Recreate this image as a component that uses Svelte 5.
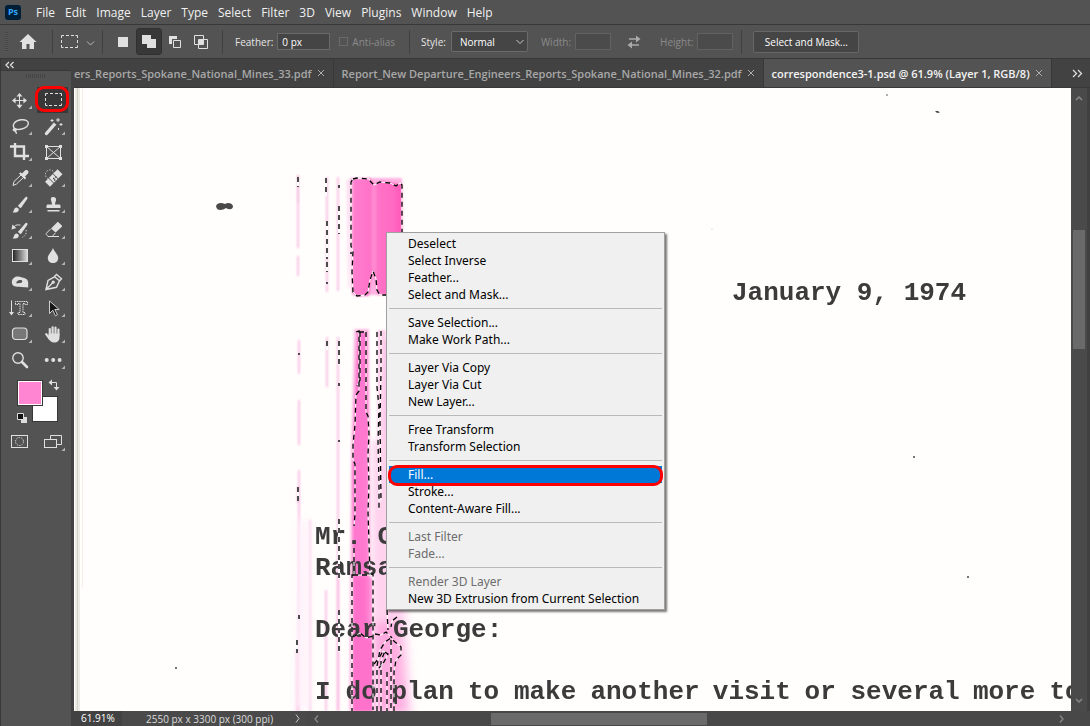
<script>
  const menus = ['File', 'Edit', 'Image', 'Layer', 'Type', 'Select', 'Filter', '3D', 'View', 'Plugins', 'Window', 'Help'];

  const tabs = [
    { name: 'ers_Reports_Spokane_National_Mines_33.pdf', first: true },
    { name: 'Report_New Departure_Engineers_Reports_Spokane_National_Mines_32.pdf' },
    { name: 'correspondence3-1.psd @ 61.9% (Layer 1, RGB/8)', active: true }
  ];

  const groups = [
    ['Deselect', 'Select Inverse', 'Feather...', 'Select and Mask...'],
    ['Save Selection...', 'Make Work Path...'],
    ['Layer Via Copy', 'Layer Via Cut', 'New Layer...'],
    ['Free Transform', 'Transform Selection'],
    ['Fill...', 'Stroke...', 'Content-Aware Fill...'],
    ['Last Filter', 'Fade...'],
    ['Render 3D Layer', 'New 3D Extrusion from Current Selection']
  ];
  const disabled = ['Last Filter', 'Fade...', 'Render 3D Layer'];

  const tools = [
    'move', 'marquee', 'lasso', 'wand', 'crop', 'frame', 'eyedropper', 'heal', 'brush', 'stamp', 'history',
    'eraser', 'gradient', 'blur', 'burn', 'pen', 'type', 'select', 'shape', 'hand', 'zoom', 'more'
  ];
  const single = ['frame', 'zoom', 'marquee'];

  const pitch = 15.3;
  const lineWords = 'I do plan to make another visit or several more to'.split(' ');
  let at = 0;
  const words = lineWords.map((w) => {
    const x = 315 + at * pitch;
    at += w.length + 1;
    return { w, x };
  });

  const ants = [
    'M353 179l4-1 12 1 2 3 3 3 6-3 10 1 6 3 4-3 2 2v55l0 55h-22l-3-5-1-11-3-8-3 9-2 12-3 3-8 1-4-4-1-20 1-20-2-6V182z',
    'M356 332l3-1v60l-3 4-1 30-2 20v15l2 4v50l-1 12M354 548v27h-2v136M366 332v80l2 4 1 18-1 20 1 30-1 28 1 30 1 32h3v136M359 332h7M360 332v48l-3 6',
    'M377 332v55l2 20-1 35 1 40v28M381 331v40l-1 50 1 80M353 575h18M353 637l7-4 6 5 7-2',
    'M377 711v-45l3-16 5-8 6-4 4 4 6 5v8l-5 5-2 12v39M381 711v-50l4-10M387 672v39M391 640v71M387 610l1 20M397 617l-5 4-1 6',
    'M375 634l6 1 5-3 6 6M374 664l5-6 4-7 5 3-4 8-5 6'
  ];
  const specks = 'M298 177v10M298 487v14M299 615v4M297 640v13M326 178v18M327 221v38M327 262v10M327 341v9M339 185v3M339 206v28M339 341v24M339 383v3M339 440v2M339 519v60M339 610v42M327 282v2M351 252v2M299 353v2';
</script>

{#snippet glyph(name)}
  {#if name === 'move'}
    <path d="M15.500 7.500v12.500M9 13.500h13" class="s" />
    <path class="f" d="M15.500 6l3 3.600h-6zM15.500 21.400l3-3.600h-6zM8 13.600l3.600-3v6zM23 13.600l-3.600-3v6z" />
  {:else if name === 'marquee'}
    <path class="s" d="M8.500 9V6.500H11M13 6.500h3M18 6.500h3M22.500 6.500H24.500V9M24.500 11v3M24.500 16.500V18.500H22M20 18.500h-3M15 18.500h-3M10.500 18.500h-2V16M8.500 14v-3" />
  {:else if name === 'lasso'}
    <path class="s w" d="M11 16C7 12 11 7.500 17 6.800c5-.600 8 1.700 7.300 4.400-.8 3.500-6.300 5.500-10.300 5.200-2-.200-4.500-1-4.700.3-.1 1.400 3 1.500 3-.1 0-1.200-1.600-1-1.500.5 0 1.300 1.600 1.500 1.700 3.600" />
  {:else if name === 'wand'}
    <path d="M9.500 20.500l6.500-7.500" stroke="#e0e0e0" stroke-width="3.400" stroke-linecap="round" />
    <path d="M16.500 12.400l1.600-1.800" stroke="#e0e0e0" stroke-width="3.400" />
    <path class="s" d="M15 6v3M13.500 7.500h3M21 5v4M19 7h4M24 10v3M22.500 11.500h3M21.500 15v2" />
  {:else if name === 'crop'}
    <path d="M11 4v13h14M6 7.500h14V21" stroke="#e0e0e0" stroke-width="2.400" fill="none" />
  {:else if name === 'frame'}
    <path class="s" d="M9.500 7.500h14v12h-14zM9.500 7.500l14 12M23.500 7.500l-14 12" />
    <path class="f" d="M8 6h3v3H8zM22 6h3v3h-3zM8 18h3v3H8zM22 18h3v3h-3z" />
  {:else if name === 'eyedropper'}
    <path class="s" d="M9 20.500l1-4 7-6.500 2.500 2.500-7 6.500z" />
    <path class="f" d="M15 8.500l1.500-1.200 1.500 1.200L21 5.600c2-1.600 4.600.8 3 3l-3 3 1.200 1.500-1.300 1.500z" />
  {:else if name === 'heal'}
    <circle cx="13" cy="9.500" r="4.600" fill="none" stroke="#e0e0e0" stroke-dasharray="1.300 1.600" />
    <path d="M10.500 19.200L23 6.800" stroke="#e0e0e0" stroke-width="7" />
    <path d="M11.600 13l6 6M15.900 8.700l6 6" stroke="#535353" />
    <path d="M16 13.500h1.500M17 15h1.500M18 12h1.500" stroke="#535353" stroke-width="1.300" />
  {:else if name === 'brush'}
    <path class="f" d="M8.500 21.300c1.600-.8 1-2.500 2.300-4 1.400-1.500 4.300-.5 4 1.700-.3 2.600-4.300 3-6.300 2.300zM14 14.800l7.400-8.600c1.100-1 2.600.200 2 1.500l-6.600 9.500c-.8-.3-2.300-1.200-2.800-2.400z" />
  {:else if name === 'stamp'}
    <path class="f" d="M14 6.700c1.500-1.300 4.300-1 5 1 .6 2-1 3.300-1 5.800h4c1 0 1.500.5 1.500 1.500v2h-14v-2c0-1 .5-1.500 1.500-1.500h4c0-2.500-1.600-4-1-6.800zM10.500 19h12v1.600h-12z" />
  {:else if name === 'history'}
    <path class="f" d="M8.500 21.300c1.600-.8 1-2.500 2.300-4 1.400-1.500 4.300-.5 4 1.700-.3 2.600-4.300 3-6.300 2.300zM14 14.800l7.400-8.600c1.100-1 2.600.200 2 1.500l-6.600 9.500c-.8-.3-2.300-1.200-2.800-2.400zM7.500 12.500l1-5 3.800 3.400z" />
    <path class="s" d="M10.500 9.200c1.300-1.300 3.500-1.700 6-1" />
    <path d="M22 13c1 3-1 6.500-4 7.500" fill="none" stroke="#e0e0e0" stroke-dasharray="1.300 1.600" />
  {:else if name === 'eraser'}
    <path class="f" d="M14 11.500l6-6c.6-.6 1-.6 1.600 0l3 2.800c.6.600.6 1 0 1.700l-6 5.500z" />
    <path class="s" d="M13.500 12l-4 4.200c-.6.600-.6 1 0 1.600l1.800 1.700h4l3-3.500M11 19.500h11" />
  {:else if name === 'gradient'}
    <rect x="8.500" y="6.500" width="15" height="12" fill="url(#ramp)" stroke="#e0e0e0" />
  {:else if name === 'blur'}
    <path class="f" d="M16 5c1 3.500 5.200 6.500 5.200 10 0 3-2.200 5-5.200 5s-5.200-2-5.200-5c0-3.500 4.200-6.500 5.200-10z" />
  {:else if name === 'burn'}
    <path class="f" fill-rule="evenodd" d="M8 14.500c-.6-3 1-6.500 5-7 3-.4 4 .8 6.500 1.300 3 .6 4.700 2.500 4.700 5v4.700l-3-.3c-2 .3-4-.4-6-.5-3 0-6.500 0-7.200-3.200zM12.600 14.400l4.700-.6c1-.3 1.300-2 .3-2.600-2-.8-6 .8-5 3.200z" />
  {:else if name === 'pen'}
    <path class="s w" d="M9 20.500l2-9 6.500-3.700 5 4-3 6.500zM9.500 20l6-6M17.500 7.500l2-2 5 4.200-1.800 2" />
    <circle class="f" cx="16.200" cy="13.200" r="1.600" />
  {:else if name === 'type'}
    <path class="s" d="M7.500 5.500v14" /><path class="f" d="M5 17h5l-2.500 3.500z" />
    <path d="M11.500 9.500v-3h12v3h-2.500v-1h-2v9h2v2h-7v-2h2v-9h-2v1z" fill="none" stroke="#e0e0e0" stroke-dasharray="1.500 .7" />
  {:else if name === 'select'}
    <path d="M12.500 6v12.500l3.300-3.300 2.600 5.600 2-1-2.600-5.300h4.400z" fill="#151515" stroke="#e0e0e0" stroke-width=".9" />
  {:else if name === 'shape'}
    <rect x="8.500" y="7" width="14.500" height="11.500" rx="3.200" fill="#777" stroke="#e0e0e0" stroke-width="1.200" />
  {:else if name === 'hand'}
    <path d="M12.800 14V8M15.600 13V6.300M18.500 13V6.700M21.400 14V8.500M12.500 17.500l-3.300-4.300" stroke="#e0e0e0" stroke-width="2.200" stroke-linecap="round" />
    <path class="f" d="M11.700 12.500h10.800v4c0 3-2.200 5-5.300 5-3 0-4.500-1.700-6-4z" />
  {:else if name === 'zoom'}
    <circle cx="14" cy="11" r="5.200" class="s w" /><path d="M18 15l5 5" stroke="#e0e0e0" stroke-width="2.600" stroke-linecap="round" />
  {:else if name === 'more'}
    <circle class="f" cx="9.700" cy="13" r="2" /><circle class="f" cx="16.200" cy="13" r="2" /><circle class="f" cx="22.600" cy="13" r="2" />
  {:else if name === 'mask'}
    <rect x="7.500" y="6.500" width="16" height="12" class="s" />
    <circle cx="15.500" cy="12.500" r="4" fill="none" stroke="#e0e0e0" stroke-dasharray="1.300 1.200" />
  {:else if name === 'screen'}
    <path class="s" d="M13.500 10.500v-4h11v9h-5" /><rect x="7.500" y="10.500" width="12" height="8" class="s" />
  {/if}
{/snippet}

{#snippet tool(name, corner)}
  <button class="tool" class:chosen={name === 'marquee'} aria-label={name}>
    <svg width="33" height="26" viewBox="0 0 33 26" fill="none">
      {@render glyph(name)}
      {#if corner}<path d="M28 18.500V22h-3.500z" fill="#b5b5b5" />{/if}
    </svg>
  </button>
{/snippet}

<div class="app">
  <nav class="menubar">
    <span class="logo">Ps</span>
    {#each menus as m}<button>{m}</button>{/each}
  </nav>

  <div class="options">
    <span class="grip"></span>
    <button class="icon home" aria-label="Home">
      <svg width="18" height="16" viewBox="0 0 18 16"><path class="f" d="M9 0l8.500 8H15v7h-4.500v-5h-3v5H3V8H.5z" /></svg>
    </button>
    <i class="sep"></i>
    <button class="icon preset" aria-label="Tool preset">
      <svg width="34" height="16" viewBox="0 0 34 16" fill="none">
        <path class="s" d="M.5 4V1.500H3M5 1.500h3M10 1.500h3M14.500 1.500h2V4M16.500 6v3M16.500 11.500v2H14M12 13.500H9M7 13.500H4M2.500 13.500h-2V11M.5 9V6" />
        <path d="M26 7.500l3.500 3.500L33 7.500" stroke="#bbb" fill="none" />
      </svg>
    </button>
    <i class="sep"></i>
    <div class="modes">
      <button class="mode" aria-label="New selection"><svg width="16" height="16"><path class="f" d="M3 3h10v10H3z" /></svg></button>
      <button class="mode on" aria-label="Add to selection"><svg width="16" height="16"><path class="f" d="M1 1h9v4h5v9H6v-4H1z" /></svg></button>
      <button class="mode" aria-label="Subtract from selection"><svg width="16" height="16"><path class="f" d="M2 2h8v3H5v5H2z" /><path class="s" d="M6.500 6.500h7v7h-7z" /></svg></button>
      <button class="mode" aria-label="Intersect with selection"><svg width="16" height="16"><path class="s" d="M1.500 1.500h9v9h-9zM5.500 5.500h9v9h-9z" /><path class="f" d="M6 6h4v4H6z" /></svg></button>
    </div>
    <i class="sep"></i>
    <label class="feather">Feather: <input value="0 px" /></label>
    <label class="check off"><input type="checkbox" disabled />Anti-alias</label>
    <i class="sep"></i>
    <label class="style">Style:
      <span class="pick">
        <select><option>Normal</option></select>
        <svg width="8" height="6" viewBox="0 0 8 6"><path d="M.5 1L4 4.500 7.500 1" stroke="#ccc" fill="none" /></svg>
      </span>
    </label>
    <label class="off size">Width: <input disabled /></label>
    <button class="icon swap" aria-label="Swap width and height">
      <svg width="14" height="14" viewBox="0 0 14 14" fill="none"><path d="M2 4h8M12 10H4" stroke="#aaa" stroke-width="1.600" /><path d="M9 .5L13.500 4 9 7.500zM5 6.500L.5 10 5 13.500z" fill="#aaa" /></svg>
    </button>
    <label class="off size">Height: <input disabled /></label>
    <i class="sep"></i>
    <button class="mask">Select and Mask...</button>
  </div>

  <div class="work">
    <aside>
      <button class="collapse" aria-label="Collapse panel">
        <svg width="10" height="8" viewBox="0 0 10 8"><path d="M4 1L1 4l3 3M8.500 1l-3 3 3 3" stroke="#ddd" stroke-width="1.300" fill="none" /></svg>
      </button>
      <div class="handle"></div>
      <svg width="0" height="0" class="defs"><defs><linearGradient id="ramp"><stop offset="0" stop-color="#222" /><stop offset="1" stop-color="#ddd" /></linearGradient></defs></svg>
      <div class="tools">
        {#each tools as t}{@render tool(t, !single.includes(t))}{/each}
      </div>
      <div class="colors">
        <button class="swatch back" aria-label="Background colour"></button>
        <button class="swatch fore" aria-label="Foreground colour"></button>
        <button class="flip" aria-label="Switch colours">
          <svg width="12" height="12" viewBox="0 0 12 12"><path class="s" d="M3 3.500h5.500V9" /><path class="f" d="M4 .5v6L.5 3.500zM5.500 8h6L8.500 11.500z" /></svg>
        </button>
        <button class="reset" aria-label="Default colours">
          <svg width="11" height="11" viewBox="0 0 11 11"><path d="M4 4h6v6H4z" fill="#ddd" /><path d="M.5.500h6v6h-6z" fill="#111" stroke="#ddd" /></svg>
        </button>
      </div>
      <div class="tools">
        {@render tool('mask', false)}{@render tool('screen', true)}
      </div>
    </aside>

    <main>
      <div class="tabs">
        {#each tabs as t}
          <div class="tab" class:active={t.active} class:first={t.first}>
            <span>{t.name}</span>
            <button aria-label="Close tab"><svg width="8" height="8" viewBox="0 0 8 8"><path d="M1 1l6 6M7 1L1 7" stroke="#aaa" /></svg></button>
          </div>
        {/each}
        <button class="overflow" aria-label="More tabs">
          <svg width="11" height="9" viewBox="0 0 11 9"><path d="M1 1l3.500 3.500L1 8M6 1l3.500 3.500L6 8" stroke="#ddd" stroke-width="1.300" fill="none" /></svg>
        </button>
      </div>

      <div class="view">
        <div class="canvas">
          <svg class="scan" width="997" height="623" viewBox="74 88 997 623">
            <defs>
              <filter id="soft" x="-30%" y="-5%" width="160%" height="110%"><feGaussianBlur stdDeviation="1" /></filter>
              <filter id="wide" x="-50%" y="-10%" width="200%" height="120%"><feGaussianBlur stdDeviation="4" /></filter>
              <filter id="ink" x="-5%" y="-10%" width="110%" height="120%"><feGaussianBlur stdDeviation=".4" /></filter>
              <linearGradient id="block"><stop offset="0" stop-color="#ff7fcf" /><stop offset=".38" stop-color="#ff72c8" /><stop offset=".44" stop-color="#ff94d6" /><stop offset=".5" stop-color="#ff74c8" /><stop offset=".85" stop-color="#ff68c1" /><stop offset="1" stop-color="#ff55b8" /></linearGradient>
            </defs>
            <rect x="75" y="88" width="5" height="623" fill="#eceae4" /><rect x="77" y="88" width="1" height="623" fill="#d4d1c7" />
            <rect x="82" y="88" width="1" height="500" fill="#f6efe4" />
            <g filter="url(#soft)">
              <path d="M350 178h52l1 117h-51z" fill="#ffb3e2" />
              <path d="M346 180h4v108h-2z" fill="#fde3f4" />
              <path d="M353 179l17-1 5 6 6-3 21 3v111h-24l-5-23-4 24h-13l-4-4z" fill="url(#block)" />
              <path d="M354 329h15l3 382h-23l2-260z" fill="#ffc1e6" />
              <path d="M357 331h10l2 104 1 276h-16l-2-240z" fill="#ff78cf" />
              <path d="M353 578h20v133h-20z" fill="#ff70cb" />
              <path d="M377 330h9v210h-9z" fill="#ffd1ec" />
              <path d="M385 340h6v250h-6z" fill="#fcc5e8" />
              <path d="M298 175v28M298 487v16" stroke="#f09ad0" stroke-width="1.500" />
              <path d="M298 203v45M298 256v20M299 340v34M299 400v45M299 470v241M327 177v115M327 337v50M338 177v114M338 337v374M310 520v191M326 590v121" stroke="#f8b9e2" stroke-width="1.700" />
              <path d="M338 560v151M297 650v61" stroke="#fba5dc" stroke-width="2.500" opacity=".6" />
            </g>
            <g filter="url(#wide)">
              <path d="M372 440h18l14 150 8 125h-40z" fill="#ffd2ee" />
              <path d="M374 622h24l8 90h-32z" fill="#ffabe0" />
              <path d="M298 520h12v190h-14z" fill="#fff3fa" />
            </g>
            <path d="M354 640h18v71h-18z" fill="#ff72cb" filter="url(#soft)" />
            <g fill="#4a4a48" filter="url(#ink)">
              <path d="M216 206c1-3 5-4 9-2 3-2 7-1 8 2 0 4-4 4-7 2-3 2-9 4-10-2z" />
              <path d="M935 111l3 0 2 1.500-3 .5z" /><circle cx="887" cy="95" r=".8" /><circle cx="914" cy="457" r="1" /><circle cx="968" cy="577" r="1" /><circle cx="176" cy="668" r="1" /><circle cx="712" cy="229" r=".6" opacity=".4" />
            </g>
            <g class="typed" filter="url(#ink)">
              <text x="732" y="300">January 9, 1974</text>
              <text x="315" y="544">Mr. C</text>
              <text x="315" y="575">Ramsa</text>
              <text x="315" y="637">Dear George:</text>
              <text y="699">{#each words as { w, x }}<tspan {x}>{w} </tspan>{/each}</text>
            </g>
            <g fill="none">
              {#each ants as d}
                <path {d} stroke="#fff" />
                <path {d} stroke="#000" stroke-width="1.300" stroke-dasharray="5 4" />
              {/each}
              <path d={specks} stroke="#fff" stroke-width="2" />
              <path d={specks} stroke="#000" stroke-width="1.400" stroke-dasharray="5 4" />
            </g>
          </svg>

          <div class="context" role="menu">
            {#each groups as g, i}
              {#if i}<hr />{/if}
              {#each g as item}
                <button role="menuitem" class:hot={item === 'Fill...'} disabled={disabled.includes(item)}>{item}</button>
              {/each}
            {/each}
          </div>
        </div>
        <div class="vbar">
          <svg width="8" height="6" viewBox="0 0 8 6"><path d="M1 5l3-3 3 3" stroke="#888" stroke-width="1.500" fill="none" /></svg>
          <div class="vthumb"></div>
          <svg width="8" height="6" viewBox="0 0 8 6"><path d="M1 1l3 3 3-3" stroke="#888" stroke-width="1.500" fill="none" /></svg>
        </div>
      </div>

      <footer>
        <span class="zoom">61.91%</span>
        <span class="dims">2550 px x 3300 px (300 ppi)</span>
        <button class="info" aria-label="Document info"><svg width="5" height="9" viewBox="0 0 5 9"><path d="M1 .5l3 4-3 4" stroke="#ccc" fill="none" /></svg></button>
        <div class="hbar">
          <svg width="5" height="8" viewBox="0 0 5 8"><path d="M4 .5L1 4l3 3.500" stroke="#888" stroke-width="1.300" fill="none" /></svg>
          <div class="hthumb"></div>
          <svg width="5" height="8" viewBox="0 0 5 8"><path d="M1 .5L4 4 1 7.500" stroke="#888" stroke-width="1.300" fill="none" /></svg>
        </div>
      </footer>
    </main>
  </div>
</div>

<style>
  :global(body) { margin: 0; background: #535353; }
  .app { height: 100vh; display: flex; flex-direction: column; background: #535353; color: #e6e6e6; font: 10px "Open Sans", sans-serif; overflow: hidden; }
  button, input, select { font: inherit; color: inherit; margin: 0; padding: 0; border: 0; background: none; border-radius: 0; }
  svg { display: block; flex: none; }
  .f { fill: #e0e0e0; }
  .s { fill: none; stroke: #e0e0e0; stroke-width: 1; }
  .s.w { stroke-width: 1.4; }

  .menubar { flex: none; height: 24px; display: flex; align-items: center; gap: 10px; padding-left: 5px; font-size: 12px; color: #f0f0f0; border-bottom: 1px solid #383838; white-space: nowrap; }
  .logo { width: 16px; height: 15px; line-height: 14px; border-radius: 3px; background: #001e36; color: #31a8ff; font-size: 9px; font-weight: 700; text-align: center; margin-right: 5px; }

  .options { flex: none; height: 33px; display: flex; align-items: center; border-bottom: 1px solid #383838; white-space: nowrap; }
  .grip { width: 3px; height: 20px; margin: 0 11px 0 5px; background: repeating-linear-gradient(#444 0 1px, #5a5a5a 1px 2px); }
  .home { margin-right: 15px; }
  .sep { flex: none; width: 1px; height: 24px; background: #404040; }
  .preset { margin: 0 7px 0 8px; }
  .modes { display: flex; gap: 2px; margin: 0 9px 0 8px; }
  .mode { width: 24px; height: 25px; display: grid; place-items: center; }
  .mode.on { background: #383838; outline: 1px solid #303030; border-radius: 2px; }
  label { display: flex; align-items: center; }
  .options input:not([type='checkbox']) { box-sizing: border-box; height: 17px; width: 53px; border: 1px solid #6a6a6a; background: #454545; padding-left: 4px; margin-left: 4px; color: #fff; }
  .feather { margin-left: 12px; }
  .check { margin: 0 14px 0 9px; gap: 4px; }
  .check input { appearance: none; width: 9px; height: 9px; border: 1px solid #6a6a6a; }
  .off { color: #8a8a8a; }
  .options .size input { width: 36px; border-color: #626262; background: #4b4b4b; }
  .style { margin: 0 13px 0 11px; gap: 5px; }
  .pick { display: grid; align-items: center; justify-items: end; }
  .pick > * { grid-area: 1 / 1; }
  .pick svg { margin-right: 4px; pointer-events: none; }
  .pick select { appearance: none; width: 77px; height: 21px; box-sizing: border-box; background: #454545; border: 1px solid #6a6a6a; border-radius: 2px; padding-left: 8px; color: #fff; }
  .swap { margin: 0 19px 0 16px; }
  .options .size + .sep { margin: 0 11px 0 8px; }
  .mask { height: 22px; width: 106px; border: 1px solid #666; background: #454545; color: #fff; border-radius: 2px; }

  .work { flex: 1; min-height: 0; display: flex; }
  aside { flex: none; width: 74px; box-sizing: border-box; border-left: 1px solid #383838; border-right: 3px solid #424242; display: flex; flex-direction: column; }
  .collapse { height: 12px; background: #424242; border-bottom: 1px solid #383838; padding-left: 4px; }
  .handle { height: 4px; width: 19px; margin: 3px 0 9px 25px; background: repeating-linear-gradient(90deg, #444 0 1px, #555 1px 2px); }
  .defs { position: absolute; }
  .tools { display: grid; grid-template-columns: 33px 33px; padding-left: 3px; }
  .tool { height: 26px; position: relative; }
  .chosen { background: linear-gradient(90deg, #383838 31px, #535353 31px); }
  .chosen::after { content: ''; position: absolute; inset: -1px 1px 1px -2px; border: 3px solid #f00; border-radius: 9px; }
  .colors { position: relative; height: 56px; }
  .swatch { position: absolute; width: 26px; height: 26px; border: 1px solid #383838; box-shadow: inset 0 0 0 1px #fff; }
  .fore { left: 16px; top: 7px; background: #ff85d2; }
  .back { left: 31px; top: 23px; background: #fff; }
  .flip { position: absolute; left: 47px; top: 6px; }
  .reset { position: absolute; left: 16px; top: 40px; }

  main { flex: 1; min-width: 0; display: flex; flex-direction: column; }
  .tabs { flex: none; height: 28px; display: flex; background: #424242; border-bottom: 1px solid #383838; font-size: 11px; font-weight: 600; color: #a8a8a8; white-space: nowrap; }
  .tab { display: flex; align-items: center; gap: 5px; padding: 0 8px; border-right: 1px solid #383838; }
  .tab.first { padding-left: 0; }
  .tab.active { background: #535353; color: #f4f4f4; }
  .overflow { margin-left: auto; padding-right: 7px; }

  .view { flex: 1; min-height: 0; display: flex; }
  .canvas { flex: 1; min-width: 0; position: relative; overflow: hidden; background: #fffefc; }
  .scan { position: absolute; left: 0; top: 0; }
  .typed { font: 700 26px "Liberation Mono", monospace; fill: #3b3a3b; }

  .context { position: absolute; left: 312px; top: 144px; width: 273px; padding: 2px; border: 1px solid #a0a0a0; background: #f0f0f0; box-shadow: 2px 2px 2px #0008; font: 12px "Noto Sans", sans-serif; color: #000; display: flex; flex-direction: column; }
  .context button { height: 17px; line-height: 17px; text-align: left; padding-left: 19px; position: relative; }
  .context button:disabled { color: #6d6d6d; }
  .context .hot { background: #0078d7; color: #fff; }
  .context .hot::after { content: ''; position: absolute; inset: -1px -1px -3px -1px; border: 3px solid #f00; border-radius: 9px; }
  hr { width: 100%; height: 1px; border: 0; margin: 5px 0; background: #b9b9b9; }

  .vbar { flex: none; width: 16px; display: flex; flex-direction: column; align-items: center; justify-content: space-between; background: #4a4a4a; border-right: 3px solid #404040; padding: 7px 0; box-sizing: content-box; }
  .vthumb { width: 12px; height: 119px; background: #6a6a6a; margin-bottom: 220px; }
  footer { flex: none; height: 15px; display: flex; align-items: center; background: #4a4a4a; color: #ddd; white-space: nowrap; }
  .zoom { width: 41px; padding-left: 7px; background: #424242; color: #fff; line-height: 15px; }
  .dims { padding-left: 24px; width: 149px; }
  .info { width: 9px; margin-right: 2px; }
  .hbar { flex: 1; align-self: stretch; display: flex; align-items: center; justify-content: space-between; background: #484848; padding: 0 26px 0 8px; }
  .hthumb { width: 216px; height: 12px; background: #6a6a6a; margin-right: 180px; }
</style>
